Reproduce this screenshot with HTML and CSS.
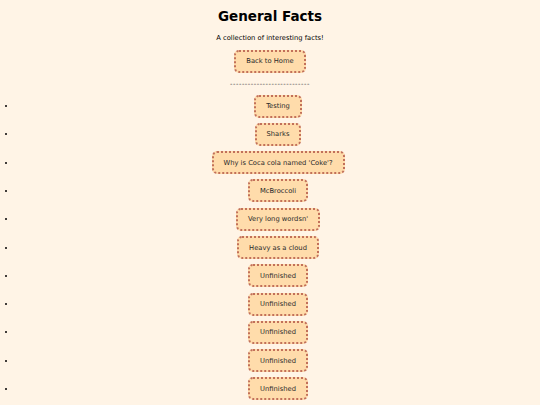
FILE: index.html
```html
<!DOCTYPE html>
<html lang="en">
<head>
<meta charset="utf-8">
<title>General Facts</title>
<link rel="stylesheet" href="styles.css">
</head>
<body>
<h1 class="title">General Facts</h1>
<p class="subtitle">A collection of interesting facts!</p>
<div class="home"><a class="btn" href="#">Back to Home</a></div>
<p class="divider">---------------------------</p>
<ul class="facts">
  <li><a class="btn" href="#">Testing</a></li>
  <li><a class="btn" href="#">Sharks</a></li>
  <li><a class="btn" href="#">Why is Coca cola named 'Coke'?</a></li>
  <li><a class="btn" href="#">McBroccoli</a></li>
  <li><a class="btn" href="#">Very long wordsn'</a></li>
  <li><a class="btn" href="#">Heavy as a cloud</a></li>
  <li><a class="btn" href="#">Unfinished</a></li>
  <li><a class="btn" href="#">Unfinished</a></li>
  <li><a class="btn" href="#">Unfinished</a></li>
  <li><a class="btn" href="#">Unfinished</a></li>
  <li><a class="btn" href="#">Unfinished</a></li>
</ul>
</body>
</html>
```

FILE: styles.css
```css
html, body {
  margin: 0;
  padding: 0;
  background: #fff4e6;
}
body {
  font-family: "DejaVu Sans", Verdana, sans-serif;
  font-size: 6.75px;
  color: #000;
  text-align: center;
}
.title {
  font-size: 13.5px;
  font-weight: bold;
  margin: 9px 0 9px;
  line-height: 15.7px;
}
.subtitle {
  margin: 0 0 8px;
  line-height: 8px;
}
.home {
  margin: 0;
}
.btn {
  display: inline-block;
  padding: 5.5px 10px;
  background: #ffdcab;
  border: 2px dotted #c2705a;
  border-radius: 5px;
  color: #2a2a2a;
  text-decoration: none;
  line-height: 8px;
}
.divider {
  margin: 7px 0 0;
  line-height: 8px;
  letter-spacing: 0.52px;
  color: #333;
}
.facts {
  margin: 4.3px 0 0;
  padding-left: 16px;
  list-style: disc;
}
.facts li {
  padding: 2.65px 0;
}
```
